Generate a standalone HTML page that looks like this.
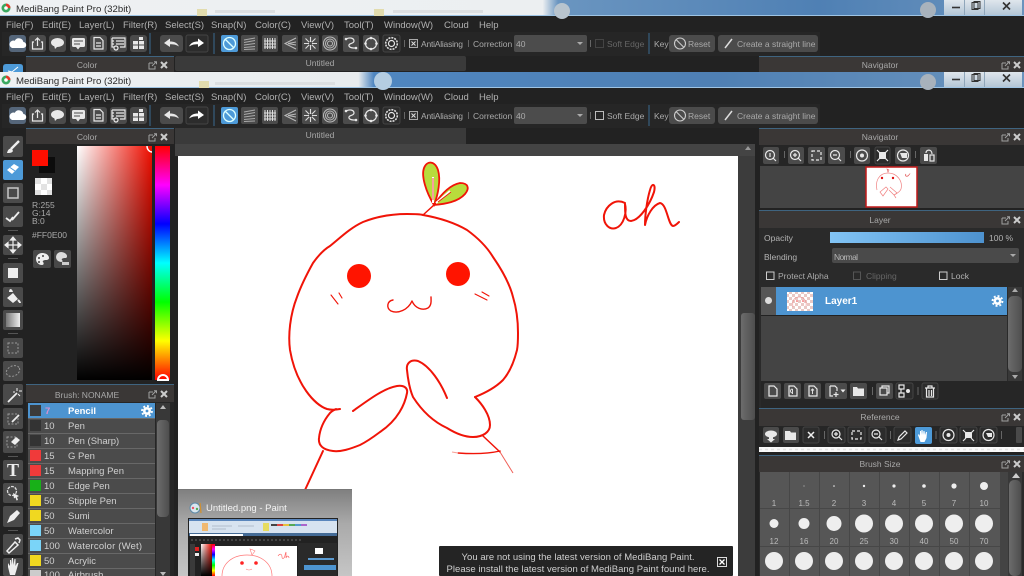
<!DOCTYPE html>
<html><head><meta charset="utf-8"><title>MediBang Paint Pro</title>
<style>
html,body{margin:0;padding:0;background:#222;width:1024px;height:576px;overflow:hidden}
svg{display:block;position:absolute;left:0;top:0;filter:blur(.3px)}
text{font-family:"Liberation Sans",sans-serif;font-size:9.5px;fill:#b4b4b4}
.m{font-size:9.5px;fill:#b0b0b0}
.t{font-size:9.6px;fill:#2a2a2a}
.s{font-size:8.5px;fill:#aaa}
.h{font-size:8.5px;fill:#a8a8a8;text-anchor:middle}
.n{font-size:9.5px;fill:#d0d0d0}
.l{font-size:8.5px;fill:#b4b4b4}
.bl{font-size:8px;fill:#bbb;text-anchor:middle}
.b{fill:#4b4b4b}
.ic{fill:none;stroke:#e8e8e8;stroke-width:1.2}
.fi{fill:#e8e8e8}
.r{fill:none;stroke:#f01408;stroke-linecap:round;stroke-linejoin:round}
</style></head><body>
<svg width="1024" height="576" viewBox="0 0 1024 576" xmlns="http://www.w3.org/2000/svg">
<defs>
<linearGradient id="t1" x1="0" x2="1" y1="0" y2="0"><stop offset="0" stop-color="#eef1f3"/><stop offset=".53" stop-color="#eceff1"/><stop offset=".545" stop-color="#6a95c0"/><stop offset=".8" stop-color="#4f80b4"/><stop offset="1" stop-color="#6a93bd"/></linearGradient>
<linearGradient id="t2" x1="0" x2="1" y1="0" y2="0"><stop offset="0" stop-color="#eef1f3"/><stop offset=".35" stop-color="#e8ecee"/><stop offset=".365" stop-color="#4f86c0"/><stop offset=".7" stop-color="#4f80b4"/><stop offset="1" stop-color="#6a93bd"/></linearGradient>
<linearGradient id="sw" x1="0" x2="1" y1="0" y2="0"><stop offset="0" stop-color="#fff"/><stop offset="1" stop-color="#f00e00"/></linearGradient>
<linearGradient id="sb" x1="0" x2="0" y1="0" y2="1"><stop offset="0" stop-color="#000" stop-opacity="0"/><stop offset="1" stop-color="#000"/></linearGradient>
<linearGradient id="hue" x1="0" x2="0" y1="0" y2="1"><stop offset="0" stop-color="#f00"/><stop offset=".167" stop-color="#f0f"/><stop offset=".333" stop-color="#00f"/><stop offset=".5" stop-color="#0ff"/><stop offset=".667" stop-color="#0f0"/><stop offset=".833" stop-color="#ff0"/><stop offset="1" stop-color="#f00"/></linearGradient>
<linearGradient id="op" x1="0" x2="1" y1="0" y2="0"><stop offset="0" stop-color="#82c4f5"/><stop offset="1" stop-color="#4d92cf"/></linearGradient>
<linearGradient id="sc" x1="0" x2="1" y1="0" y2="0"><stop offset="0" stop-color="#6c6c6c"/><stop offset="1" stop-color="#4e4e4e"/></linearGradient>
<linearGradient id="pop" x1="0" x2="0" y1="0" y2="1"><stop offset="0" stop-color="#7f7f7f"/><stop offset=".4" stop-color="#aaa"/><stop offset="1" stop-color="#c6c6c6"/></linearGradient>
<linearGradient id="grd" x1="0" x2="1" y1="0" y2="0"><stop offset="0" stop-color="#777"/><stop offset="1" stop-color="#eee"/></linearGradient>
<linearGradient id="cap" x1="0" x2="0" y1="0" y2="1"><stop offset="0" stop-color="#dfe6ec"/><stop offset="1" stop-color="#b4c6d6"/></linearGradient>
<pattern id="ck2" width="6" height="6" patternUnits="userSpaceOnUse"><rect width="6" height="6" fill="#fff"/><rect width="3" height="3" fill="#e9c9c5"/><rect x="3" y="3" width="3" height="3" fill="#e9c9c5"/></pattern>

<g id="pin"><path d="M0 2h4M0 2v6h6V5" fill="none" stroke="#a0a0a0" stroke-width="1"/><path d="M3 5l4-4M5 .8h2.5v2.5" fill="none" stroke="#a0a0a0" stroke-width="1"/><path d="M12 1l6 6M18 1l-6 6" stroke="#ccc" stroke-width="2"/></g>

<g id="gear"><circle r="4" fill="#fff"/><circle r="5" fill="none" stroke="#fff" stroke-width="1.8" stroke-dasharray="2 1.9"/><circle r="1.4" fill="#4d94d0"/></g>

<g id="tb">
<rect x="9" y="35" width="17" height="17" rx="3" fill="#55667a"/>
<path d="M12 48h11a3 3 0 0 0 .4-6 4.6 4.6 0 0 0-8.600-1.200A3.600 3.600 0 0 0 12 48z" fill="#fff"/>
<rect class="b" x="29" y="35" width="17" height="17" rx="3"/><path class="ic" d="M34 42h-1.500v7h10v-7H41M37.500 46v-8M35 40.500l2.500-2.500 2.500 2.500"/>
<rect class="b" x="49" y="35" width="17" height="17" rx="3"/><ellipse class="fi" cx="57.500" cy="42.500" rx="6.500" ry="4.500"/><path class="fi" d="M54 45l1 4 3-3z"/>
<rect class="b" x="70" y="35" width="17" height="17" rx="3"/><rect class="fi" x="72" y="38" width="13" height="9" rx="1.500"/><path d="M74 41h9M74 44h6" stroke="#4b4b4b"/><path class="fi" d="M76 47h4l-2 2.500z"/>
<rect class="b" x="90" y="35" width="17" height="17" rx="3"/><path class="ic" d="M94 37.500h6l3 3v8.500h-9zM96 43h5M96 46h5"/>
<rect class="b" x="110" y="35" width="17" height="17" rx="3"/><path class="ic" d="M112 38h13v9h-5M112 38v9h2M116 41h8M116 44h8M112 41h2M112 44h2" stroke-width="1"/><circle class="ic" cx="116" cy="48" r="2"/>
<rect class="b" x="130" y="35" width="17" height="17" rx="3"/><path class="fi" d="M133 41h5v3.500h-5zM139 41h5v3.500h-5zM133 45.500h5V49h-5zM139 45.500h5V49h-5zM139 37h4v3h-4z"/>
<path d="M150 33v21" stroke="#3a6a90"/>
<rect class="b" x="160" y="35" width="23" height="17" rx="3"/><path class="fi" d="M164 43l6-4.500v3c4 0 7 1 9 5-3-2-5-2.300-9-2.300V47z"/>
<rect x="186" y="35" width="22" height="17" rx="2" fill="#2c2c2c" stroke="#444"/><path d="M204 43l-6-4.500v3c-4 0-7 1-9 5 3-2 5-2.300 9-2.300V47z" fill="#fff"/>
<path d="M214 33v21" stroke="#3a6a90"/>
<rect x="221" y="35" width="17" height="17" rx="2" fill="#4d9ad8"/><circle cx="229.500" cy="43.500" r="6" fill="none" stroke="#dff" stroke-width="1.300"/><path d="M225.500 39.500l8 8" stroke="#dff" stroke-width="1.300"/>
<rect class="b" x="241" y="35" width="17" height="17" rx="2"/><path d="M244 40l11-2M244 42.500l11-2M244 45l11-1.500M244 47.500l11-1M244 49.500l11-.5" stroke="#aaa" stroke-width="1"/>
<rect class="b" x="262" y="35" width="16" height="17" rx="2"/><path d="M265 38v11M267.500 38v11M270 38v11M272.500 38v11M275 38v11M264 41h12M264 44h12M264 47h12" stroke="#ddd" stroke-width="1"/>
<rect class="b" x="282" y="35" width="16" height="17" rx="2"/><path d="M296 38l-11 5.500 11 5.500M296 42l-8 1.500 8 1.500" fill="none" stroke="#bbb"/>
<rect class="b" x="302" y="35" width="17" height="17" rx="2"/><path d="M310.500 37v13M304 43.500h13M305.500 38.500l10 10M315.500 38.500l-10 10" stroke="#ddd" stroke-width="1.100"/><rect x="309" y="42" width="3" height="3" fill="#4b4b4b"/>
<rect class="b" x="322" y="35" width="16" height="17" rx="2"/><circle cx="330" cy="43.500" r="6.500" fill="none" stroke="#bbb"/><circle cx="330" cy="43.500" r="4.500" fill="none" stroke="#bbb"/><circle cx="330" cy="43.500" r="2.500" fill="none" stroke="#bbb"/>
<rect class="b" x="343" y="35" width="16" height="17" rx="2"/><path class="ic" d="M346 39c4-2 8-1 8 2 0 3-6 2-5 5 .5 2 4 2 7 2"/><circle class="fi" cx="346" cy="39" r="1.300"/><circle class="fi" cx="356" cy="48" r="1.300"/>
<rect class="b" x="363" y="35" width="16" height="17" rx="2"/><circle class="ic" cx="371" cy="43.500" r="5.500" stroke-width="1.400"/><circle class="fi" cx="371" cy="38" r="1.300"/><circle class="fi" cx="371" cy="49" r="1.300"/><circle class="fi" cx="365.500" cy="43.500" r="1.300"/><circle class="fi" cx="376.500" cy="43.500" r="1.300"/>
<rect x="383" y="35" width="17" height="17" rx="2" fill="#2c2c2c" stroke="#444"/><circle class="ic" cx="391.500" cy="43.500" r="3"/><circle cx="391.500" cy="43.500" r="5.800" fill="none" stroke="#ddd" stroke-width="1.600" stroke-dasharray="2 1"/>
<path d="M404.500 40v7M468.500 40v7M590.500 40v7" stroke="#666"/>
<rect x="409.500" y="39.500" width="8" height="8" fill="#333" stroke="#aaa"/><path d="M411.500 41.500l4 4M415.500 41.500l-4 4" stroke="#ddd"/>
<rect x="514" y="35" width="73" height="17" rx="2" fill="#4c4c4c"/><path d="M577 42h6l-3 3z" fill="#aaa"/>
<path d="M649 33v21" stroke="#3a6a90"/>
<rect class="b" x="669" y="35" width="46" height="17" rx="3"/><circle cx="680" cy="43.500" r="5.500" fill="none" stroke="#ccc" stroke-width="1.100"/><path d="M676 39.500l8 8" stroke="#ccc" stroke-width="1.100"/>
<rect class="b" x="718" y="35" width="100" height="17" rx="3"/><path d="M725 48l7-9" stroke="#ddd" stroke-width="1.500"/>
</g>

<g id="caps"><rect x="944" width="78" height="15" fill="url(#cap)"/><path d="M964.500 0v15M984.500 0v15" stroke="#8fa6ba"/><path d="M952 7.500h8" stroke="#333" stroke-width="1.600"/><rect x="972" y="2.500" width="6" height="7" fill="none" stroke="#333"/><rect x="974" y="1.500" width="6" height="7" fill="none" stroke="#333"/><path d="M1003 2.500l7 7M1010 2.500l-7 7" stroke="#333" stroke-width="1.600"/></g>
</defs>

<rect width="1024" height="576" fill="#222"/>

<!-- first window -->
<rect width="1024" height="16" fill="url(#t1)"/>
<path d="M0 15.500h1024" stroke="#9ec4e4" stroke-width="1"/>
<circle cx="562" cy="11" r="8" fill="#b8c4ce"/><circle cx="928" cy="10" r="8" fill="#a8b2bc"/>
<rect x="197" y="9" width="10" height="7" fill="#e2dcae"/><rect x="374" y="9" width="10" height="7" fill="#e2dcae"/>
<rect x="215" y="10" width="60" height="3" fill="#dcdfe1"/><rect x="393" y="10" width="90" height="3" fill="#dcdfe1"/>
<circle cx="6" cy="8" r="4.500" fill="#3aa860"/><path d="M6 3.500a4.500 4.500 0 0 1 4.500 4.500H6z" fill="#e23a2a"/><circle cx="6" cy="8" r="1.800" fill="#fff"/>
<text class="t" x="16" y="12">MediBang Paint Pro (32bit)</text>
<use href="#caps"/>
<text class="m" x="6" y="28">File(F)</text><text class="m" x="42" y="28">Edit(E)</text><text class="m" x="79" y="28">Layer(L)</text><text class="m" x="123" y="28">Filter(R)</text><text class="m" x="165" y="28">Select(S)</text><text class="m" x="211" y="28">Snap(N)</text><text class="m" x="255" y="28">Color(C)</text><text class="m" x="301" y="28">View(V)</text><text class="m" x="344" y="28">Tool(T)</text><text class="m" x="384" y="28">Window(W)</text><text class="m" x="444" y="28">Cloud</text><text class="m" x="479" y="28">Help</text>
<rect x="2" y="32" width="818" height="24" fill="#262626"/>
<use href="#tb"/>
<text class="s" x="421" y="47" textLength="42">AntiAliasing</text><text class="s" x="473" y="47">Correction</text><text class="s" x="516" y="47">40</text>
<rect x="595.500" y="39.500" width="8" height="8" fill="none" stroke="#444"/><text class="s" x="607" y="47" style="fill:#666">Soft Edge</text>
<text class="s" x="654" y="47">Key</text><text class="s" x="688" y="47">Reset</text><text class="s" x="737" y="47">Create a straight line</text>
<rect x="26" y="56" width="148" height="16" fill="#3a3736"/><path d="M26 56.500h148" stroke="#3f6480"/>
<text class="h" x="87" y="68">Color</text><use href="#pin" x="149" y="61"/>
<rect x="175" y="56" width="291" height="15" rx="2" fill="#3a3a3a"/><text class="h" x="320" y="66">Untitled</text>
<rect x="759" y="56" width="265" height="16" fill="#3a3736"/><path d="M759 56.500h265" stroke="#3f6480"/>
<text class="h" x="880" y="68">Navigator</text><use href="#pin" x="1002" y="61"/>
<path d="M3 67q0-3 3-3h14q3 0 3 3v5H3z" fill="#4d9ad8"/><path d="M8 71l4 1 6-5" stroke="#fff" fill="none"/>

<!-- second window -->
<rect y="72" width="1024" height="16" fill="url(#t2)"/>
<path d="M0 87.500h1024" stroke="#9ec4e4" stroke-width="1"/>
<circle cx="383" cy="81" r="9" fill="#b4cde2"/><circle cx="928" cy="82" r="8" fill="#a8b2bc"/>
<rect x="199" y="81" width="10" height="7" fill="#e2dcae"/><rect x="215" y="82" width="120" height="3" fill="#dcdfe1"/>
<circle cx="6" cy="80" r="4.500" fill="#3aa860"/><path d="M6 75.500a4.500 4.500 0 0 1 4.500 4.500H6z" fill="#e23a2a"/><circle cx="6" cy="80" r="1.800" fill="#fff"/>
<text class="t" x="16" y="84">MediBang Paint Pro (32bit)</text>
<use href="#caps" y="72"/>
<text class="m" x="6" y="100">File(F)</text><text class="m" x="42" y="100">Edit(E)</text><text class="m" x="79" y="100">Layer(L)</text><text class="m" x="123" y="100">Filter(R)</text><text class="m" x="165" y="100">Select(S)</text><text class="m" x="211" y="100">Snap(N)</text><text class="m" x="255" y="100">Color(C)</text><text class="m" x="301" y="100">View(V)</text><text class="m" x="344" y="100">Tool(T)</text><text class="m" x="384" y="100">Window(W)</text><text class="m" x="444" y="100">Cloud</text><text class="m" x="479" y="100">Help</text>
<rect x="2" y="104" width="818" height="24" fill="#262626"/>
<use href="#tb" y="72"/>
<text class="s" x="421" y="119" textLength="42">AntiAliasing</text><text class="s" x="473" y="119">Correction</text><text class="s" x="516" y="119">40</text>
<rect x="595.500" y="111.500" width="8" height="8" fill="none" stroke="#bbb"/><text class="s" x="607" y="119">Soft Edge</text>
<text class="s" x="654" y="119">Key</text><text class="s" x="688" y="119">Reset</text><text class="s" x="737" y="119">Create a straight line</text>

<!-- canvas area -->
<rect x="174" y="128" width="585" height="448" fill="#222"/>
<rect x="175" y="128" width="291" height="16" fill="#3a3a3a"/><text class="h" x="320" y="138">Untitled</text>
<rect x="175" y="144" width="580" height="12" fill="#444"/>
<rect x="178" y="156" width="560" height="420" fill="#fff"/>
<rect x="738" y="156" width="17" height="420" fill="#3c3c3c"/>
<rect x="741" y="313" width="14" height="107" rx="3" fill="url(#sc)"/>
<path d="M748 146l-3 4h6z" fill="#999"/>

<!-- drawing -->
<path class="r" stroke-width="2" d="M340 409C335 410 331 410 327 409C315 405 296 385 290 350C288 335 290 315 297 297C302 283 308 272 313 263C318 256 323 250 330 246C340 238 350 228 363 222C378 216 392 214 407 214C415 214 420 214 423 215C440 218 455 223 467 230C478 238 487 247 493 257C502 270 510 285 513 297C517 310 518 322 518 333C518 340 518 345 517 350C514 362 510 372 503 380C495 388 485 393 475 397"/>
<path class="r" stroke-width="2" d="M353 411C367 401 384 388 397 386C404 385 408 388 407 393C405 404 398 420 380 432C372 438 366 442 360 445C350 449 341 452 333 451C324 450 318 446 319 438C320 428 325 419 330 413C332 411 334 410 336 409"/>
<path class="r" stroke-width="2" d="M447 398C441 383 430 366 418 361C410 359 406 364 407 370C408 380 410 390 413 397C422 411 434 422 447 428C455 433 464 437 473 437C483 437 490 432 490 425C490 415 482 404 475 397"/>
<path class="r" stroke-width="2" d="M323 451L305 490"/>
<path class="r" stroke-width="1.500" d="M483 436L500 452"/>
<path d="M500 452L513 473" stroke="#f06058" stroke-width="1" fill="none"/>
<path class="r" stroke-width="1.400" d="M458 453C472 454 487 454 500 451"/>
<path d="M452 452L458 453" stroke="#f8a098" stroke-width="1"/>
<circle cx="359" cy="276" r="12" fill="#ff1400"/><circle cx="458" cy="274" r="12" fill="#ff1400"/>
<path class="r" stroke-width="1.400" d="M393 300C387 301 386 308 391 311C398 314 408 310 412 301C415 308 422 311 428 308C432 305 431 300 431 297"/>
<path class="r" stroke-width="1.100" d="M331 295L338 304M339 293L342 298M475 294L487 300M482 292L489 296"/>
<path d="M434 205C426 192 421 176 424 168C427 160 435 161 438 170C441 180 438 195 434 205z" fill="#b8dc3c" stroke="#f01408" stroke-width="1.800"/>
<path d="M434 205C440 196 449 185 460 183C468 183 470 188 465 194C458 202 445 204 434 205z" fill="#b8dc3c" stroke="#f01408" stroke-width="1.800"/>
<path d="M433 203L433 177M436 203L450 191" stroke="#fff" stroke-width="2"/><path d="M433 200L433 178M438 202L451 192" stroke="#f01408" stroke-width=".8"/>
<path class="r" stroke-width="1.500" d="M434 205L423 215"/>
<path class="r" stroke-width="2" d="M625 203C615 198 606 206 604 215C603 225 610 230 616 228C624 225 627 212 625 204C625 213 625 221 631 221C640 220 650 204 654 192C656 184 652 182 650 190C647 200 645 215 645 225C647 215 653 205 660 203C667 204 668 225 673 226C675 226 677 224 679 222"/>

<!-- popup -->
<rect x="178" y="489" width="174" height="87" fill="url(#pop)"/><path d="M178 489.500h174" stroke="#777"/>
<circle cx="195" cy="508" r="5" fill="#d9e6ef" stroke="#5d8aa8"/><circle cx="193" cy="508" r="1.200" fill="#e56"/><circle cx="197" cy="509" r="1.200" fill="#5a5"/><path d="M200 503l1 10" stroke="#d09030" stroke-width="1.300"/>
<text x="206" y="511" style="font-size:9.500px;fill:#f4f4f4">Untitled.png - Paint</text>
<rect x="188" y="518" width="150" height="58" fill="#222"/>
<rect x="189" y="519" width="148" height="14" fill="#d7e3f0"/>
<rect x="189" y="519" width="148" height="2" fill="#5a86bc"/>
<rect x="202" y="523" width="6" height="8" fill="#f0b870"/><rect x="263" y="523" width="6" height="8" fill="#e6dc60"/>
<path d="M212 526h20M212 529h14M238 526h16" stroke="#b0bccc"/>
<path d="M271 525h6" stroke="#444" stroke-width="2"/><path d="M277 525h6" stroke="#d44" stroke-width="2"/><path d="M283 525h6" stroke="#e8c040" stroke-width="2"/><path d="M289 525h6" stroke="#5a5" stroke-width="2"/><path d="M295 525h6" stroke="#59c" stroke-width="2"/><path d="M301 525h6" stroke="#a6c" stroke-width="2"/>
<rect x="189" y="533" width="148" height="3" fill="#446b96"/><rect x="190" y="534" width="53" height="2" fill="#fff"/>
<path d="M191 540h110" stroke="#666" stroke-dasharray="2 2"/>
<rect x="201" y="544" width="11" height="32" fill="url(#sw)"/><rect x="201" y="544" width="11" height="32" fill="url(#sb)"/>
<rect x="212" y="544" width="3" height="32" fill="url(#hue)"/>
<rect x="215" y="546" width="82" height="30" fill="#fff"/>
<rect x="190" y="544" width="5" height="32" fill="#3a3a3a"/><rect x="195" y="547" width="4" height="4" fill="#d22"/><rect x="195" y="553" width="4" height="3" fill="#eee"/>
<rect x="298" y="543" width="39" height="33" fill="#2a2a2a"/><rect x="315" y="548" width="8" height="6" fill="#fff"/><rect x="308" y="558" width="26" height="2" fill="#5a9ad0"/><rect x="304" y="565" width="32" height="5" fill="#4d94d0"/>
<path d="M222 576c0-12 10-21 25-21s25 9 25 21" fill="none" stroke="#f77" stroke-width=".7"/><circle cx="242" cy="563" r="1.800" fill="#f22"/><circle cx="256" cy="563" r="1.800" fill="#f22"/><path d="M246 569q3 2 6 0" fill="none" stroke="#f77" stroke-width=".6"/><path d="M252 555l-2-6 3 1 2 1z" fill="none" stroke="#f77" stroke-width=".6"/>
<path d="M278 556c2-3 4-2 4 1s3 1 3-2l1-3v6c1-3 3-2 3 0" fill="none" stroke="#f55" stroke-width=".6"/>

<!-- notification -->
<rect x="439" y="546" width="294" height="30" rx="1" fill="#242424"/>
<text x="578" y="560" text-anchor="middle" style="font-size:9.500px;fill:#cfcfcf" textLength="233">You are not using the latest version of MediBang Paint.</text>
<text x="578" y="572" text-anchor="middle" style="font-size:9.500px;fill:#cfcfcf" textLength="263">Please install the latest version of MediBang Paint found here.</text>
<rect x="717.500" y="557.500" width="9" height="9" fill="none" stroke="#ddd"/><path d="M719.500 559.500l5 5M724.500 559.500l-5 5" stroke="#fff" stroke-width="1.300"/>

<!-- tool strip -->
<rect x="0" y="128" width="26" height="448" fill="#222"/>
<g fill="#4a4a4a">
<rect x="3" y="136" width="20" height="21" rx="2"/>
<rect x="3" y="183" width="20" height="20" rx="2"/><rect x="3" y="206" width="20" height="21" rx="2"/>
<rect x="3" y="235" width="20" height="20" rx="2"/><rect x="3" y="263" width="20" height="20" rx="2"/>
<rect x="3" y="287" width="20" height="20" rx="2"/><rect x="3" y="310" width="20" height="20" rx="2"/>
<rect x="3" y="338" width="20" height="20" rx="2"/><rect x="3" y="361" width="20" height="20" rx="2"/>
<rect x="3" y="384" width="20" height="21" rx="2"/><rect x="3" y="408" width="20" height="21" rx="2"/>
<rect x="3" y="431" width="20" height="22" rx="2"/><rect x="3" y="460" width="20" height="20" rx="2"/>
<rect x="3" y="483" width="20" height="20" rx="2"/><rect x="3" y="506" width="20" height="21" rx="2"/>
<rect x="3" y="534" width="20" height="21" rx="2"/><rect x="3" y="558" width="20" height="18" rx="2"/>
</g>
<rect x="3" y="160" width="20" height="20" rx="2" fill="#4d9ad8"/>
<path d="M8 230.500h10M8 258.500h10M8 333.500h10M8 456.500h10M8 530.500h10" stroke="#555"/>
<path d="M19 141L11 149" stroke="#eee" stroke-width="2.400"/><path d="M7 153c1-4 3-5 5-4l1 2c-1 2-3 2-6 2z" fill="#eee"/>
<path d="M7 170l7-6 5 3-7 7z" fill="#fff"/><path d="M10 167.500l5 3.500" stroke="#4d9ad8"/>
<rect x="8" y="188" width="10" height="10" fill="none" stroke="#c8c8c8" stroke-width="1.500"/>
<path d="M6 218l4 3 3-4M12 220l7-8" fill="none" stroke="#eee" stroke-width="1.800"/>
<path d="M13 237v16M5 245h16M13 237l-2.500 3h5zM13 253l-2.500-3h5zM5 245l3-2.500v5zM21 245l-3-2.500v5z" fill="#eee" stroke="#eee" stroke-width="1.200"/>
<rect x="8" y="268" width="10" height="10" fill="#eee"/>
<path d="M7 298l6-5 5 6-5 4zM9 292c0-4 3-4 4 0" fill="#eee"/><path d="M18 300c1 1 2 2 2 3" stroke="#eee" stroke-width="2"/>
<rect x="6" y="313" width="14" height="14" fill="url(#grd)"/>
<rect x="8" y="343" width="10" height="10" fill="none" stroke="#999" stroke-dasharray="2 1.500"/>
<ellipse cx="13" cy="371" rx="7" ry="5" fill="none" stroke="#999" stroke-dasharray="2 1.500" transform="rotate(-25 13 371)"/>
<path d="M8 402l9-9" stroke="#eee" stroke-width="1.800"/><path d="M17 388v3M19 391h3M15 392h-2M18 394l2 2" stroke="#eee"/>
<rect x="8" y="414" width="10" height="10" fill="none" stroke="#999" stroke-dasharray="2 1.500"/><path d="M12 422l7-7" stroke="#eee" stroke-width="1.800"/>
<rect x="7" y="437" width="10" height="10" fill="none" stroke="#999" stroke-dasharray="2 1.500"/><path d="M11 442l5-5 4 3-5 5z" fill="#eee"/>
<text x="13" y="476" text-anchor="middle" style="font-family:'Liberation Serif',serif;font-size:18px;font-weight:bold;fill:#eee">T</text>
<circle cx="12" cy="491" r="4.500" fill="none" stroke="#ddd" stroke-width="1.300" stroke-dasharray="3 1"/><path d="M13 493l6 3-2 1 1 3-1.500.5-1-3-1.500 1z" fill="#eee"/>
<path d="M7 523l3-7 7-6 3 3-6 7z" fill="#eee"/>
<path d="M7 551l8-9 3 3-9 8zM15 539l3-1 2 2-1 3" fill="none" stroke="#eee" stroke-width="1.500"/>
<path d="M8 567v-4l2 3v-6h1v5l1-7h1l.5 7 1-6h1l0 7 1.500-3h1.500l-2 7-1.500 5h-5z" fill="#eee"/>

<!-- color panel -->
<rect x="26" y="128" width="148" height="16" fill="#3a3736"/><path d="M26 128.500h148" stroke="#3f6480"/>
<text class="h" x="87" y="140">Color</text><use href="#pin" x="149" y="133"/>
<rect x="39" y="157" width="16" height="16" fill="#0c0c0c"/><rect x="32" y="150" width="16" height="16" fill="#ff0e00"/>
<rect x="35" y="178" width="17" height="17" fill="#fff"/>
<path d="M35 178h6v6h-6zM47 178h5v6h-5zM41 184h6v6h-6zM35 190h6v5h-6zM47 190h5v5h-5z" fill="#e2e2e2"/>
<text class="s" x="32" y="208">R:255</text><text class="s" x="32" y="216">G:14</text><text class="s" x="32" y="224">B:0</text><text class="s" x="32" y="238">#FF0E00</text>
<rect x="33" y="250" width="18" height="18" rx="2" fill="#484848"/><rect x="54" y="250" width="17" height="18" rx="2" fill="#484848"/>
<path d="M42 253a6 6 0 1 0 0 12c2 0 2-2 1-3s1-2 3-2 3-1 3-2c0-3-3-5-7-5z" fill="#eee"/><circle cx="39" cy="258" r="1" fill="#444"/><circle cx="43" cy="256" r="1" fill="#444"/><circle cx="39" cy="262" r="1" fill="#444"/>
<path d="M61 252a5 5 0 1 0 0 10c2 0 2-1 1-2s1-2 3-2 2-1 2-2c0-2-3-4-6-4z" fill="#ddd"/><rect x="62" y="262" width="7" height="3" fill="#ccc"/>
<rect x="77" y="146" width="75" height="234" fill="url(#sw)"/><rect x="77" y="146" width="75" height="234" fill="url(#sb)"/>
<path d="M147 146c0 4 3 6 5 6" fill="none" stroke="#fff" stroke-width="1.500"/>
<rect x="155" y="146" width="15" height="234" fill="url(#hue)"/>
<path d="M158 380a5 5 0 0 1 10 0z" fill="none" stroke="#fff" stroke-width="2"/>

<!-- brush panel -->
<rect x="26" y="384" width="148" height="192" fill="#262626"/>
<path d="M26 384.500h148" stroke="#3f6480"/><rect x="26" y="385" width="148" height="17" fill="#3a3736"/>
<text class="h" x="87" y="398">Brush: NONAME</text><use href="#pin" x="149" y="390"/>
<rect x="28" y="403" width="127" height="173" fill="#4b4b4b"/>
<rect x="28" y="403" width="127" height="15" fill="#4d94d0"/>
<path d="M28 433.500h127M28 448.500h127M28 463.500h127M28 478.500h127M28 493.500h127M28 508.500h127M28 523.500h127M28 538.500h127M28 553.500h127M28 568.500h127M28 418.500h127" stroke="#686868"/>
<rect x="30" y="405" width="11" height="11" fill="#3b3b3b"/><rect x="30" y="420" width="11" height="11" fill="#333"/><rect x="30" y="435" width="11" height="11" fill="#333"/><rect x="30" y="450" width="11" height="11" fill="#f03a3a"/><rect x="30" y="465" width="11" height="11" fill="#f03a3a"/><rect x="30" y="480" width="11" height="11" fill="#18b018"/><rect x="30" y="495" width="11" height="11" fill="#f0d820"/><rect x="30" y="510" width="11" height="11" fill="#f0d820"/><rect x="30" y="525" width="11" height="11" fill="#7ad4f8"/><rect x="30" y="540" width="11" height="11" fill="#7ad4f8"/><rect x="30" y="555" width="11" height="11" fill="#f0d820"/><rect x="30" y="570" width="11" height="6" fill="#ccc"/>
<text class="n" x="45" y="414" style="fill:#d890d0;font-weight:bold">7</text><text class="n" x="68" y="414" style="fill:#fff;font-weight:bold">Pencil</text>
<use href="#gear" x="147" y="411"/>
<text class="n" x="44" y="429">10</text><text class="n" x="68" y="429">Pen</text>
<text class="n" x="44" y="444">10</text><text class="n" x="68" y="444">Pen (Sharp)</text>
<text class="n" x="44" y="459">15</text><text class="n" x="68" y="459">G Pen</text>
<text class="n" x="44" y="474">15</text><text class="n" x="68" y="474">Mapping Pen</text>
<text class="n" x="44" y="489">10</text><text class="n" x="68" y="489">Edge Pen</text>
<text class="n" x="44" y="504">50</text><text class="n" x="68" y="504">Stipple Pen</text>
<text class="n" x="44" y="519">50</text><text class="n" x="68" y="519">Sumi</text>
<text class="n" x="44" y="534">50</text><text class="n" x="68" y="534">Watercolor</text>
<text class="n" x="44" y="549">100</text><text class="n" x="68" y="549" textLength="74">Watercolor (Wet)</text>
<text class="n" x="44" y="564">50</text><text class="n" x="68" y="564">Acrylic</text>
<text class="n" x="44" y="578">100</text><text class="n" x="68" y="578">Airbrush</text>
<rect x="156" y="403" width="14" height="173" fill="#383838"/><rect x="157" y="420" width="12" height="97" rx="4" fill="url(#sc)"/>
<path d="M163 405l-3 4h6zM163 576l-3-4h6z" fill="#bbb"/>

<!-- right: navigator -->
<rect x="759" y="128" width="265" height="17" fill="#3a3736"/><path d="M759 128.500h265" stroke="#3f6480"/>
<text class="h" x="880" y="140">Navigator</text><use href="#pin" x="1002" y="133"/>
<rect x="760" y="145" width="264" height="21" fill="#262626"/>
<g class="b"><rect x="763" y="147" width="16" height="17" rx="2"/><rect x="788" y="147" width="16" height="17" rx="2"/><rect x="808" y="147" width="17" height="17" rx="2"/><rect x="828" y="147" width="17" height="17" rx="2"/><rect x="854" y="147" width="16" height="17" rx="2"/><rect x="895" y="147" width="16" height="17" rx="2"/><rect x="920" y="147" width="17" height="17" rx="2"/></g>
<rect x="875" y="147" width="15" height="17" rx="2" fill="#2c2c2c" stroke="#444"/>
<circle class="ic" cx="770" cy="155" r="4.500"/><path class="ic" d="M773 158l3 3M770 153v4"/>
<circle class="ic" cx="795" cy="155" r="4.500"/><path class="ic" d="M798 158l3 3M793 155h4M795 153v4"/>
<rect class="ic" x="812" y="151" width="9" height="9" stroke-dasharray="3 2"/>
<circle class="ic" cx="835" cy="155" r="4.500"/><path class="ic" d="M838 158l3 3M833 155h4"/>
<circle class="ic" cx="862" cy="155.500" r="5.500" stroke-width="1.500"/><circle class="fi" cx="862" cy="155.500" r="2"/>
<rect class="fi" x="879" y="152" width="7" height="7"/><path class="ic" d="M877 150l3 3M888 150l-3 3M877 161l3-3M888 161l-3-3"/>
<circle class="ic" cx="903" cy="155.500" r="5.500" stroke-width="1.500"/><path class="fi" d="M900 153h7v5h-5z"/>
<rect class="fi" x="924" y="154" width="4" height="7"/><rect class="ic" x="930" y="155" width="4" height="6"/><path class="ic" d="M926 153c0-4 6-4 6 1"/>
<path d="M784.500 151v7M850.500 151v7M915.500 151v7" stroke="#666"/>
<rect x="760" y="166" width="264" height="42" fill="#444"/>
<rect x="866" y="167" width="51" height="40" fill="#fff" stroke="#c01818" stroke-width="1.500"/>
<path d="M877 190c-2-9 2-17 11-17s15 8 13 16c-1 3-5 5-7 6l2 3M880 192l6-5 2 2-5 7zM890 187l7 6-3 2-5-5" fill="none" stroke="#f08080" stroke-width=".7"/>
<circle cx="882" cy="178" r="1.200" fill="#e01010"/><circle cx="893" cy="178" r="1.200" fill="#e01010"/>
<path d="M906 174c-1 1 0 3 1 2 1 1 3-3 3-2" fill="none" stroke="#e05050" stroke-width=".7"/><path d="M888 172l-1-3 2 1z" fill="none" stroke="#e06060" stroke-width=".6"/>
<rect x="759" y="208" width="265" height="2" fill="#222"/>

<!-- right: layer -->
<path d="M759 210.500h265" stroke="#3f6480"/><rect x="759" y="211" width="265" height="17" fill="#3a3736"/>
<text class="h" x="880" y="223">Layer</text><use href="#pin" x="1002" y="216"/>
<rect x="759" y="228" width="265" height="180" fill="#2a2a2a"/>
<text class="l" x="764" y="241">Opacity</text>
<rect x="830" y="232" width="154" height="11" fill="url(#op)"/>
<text class="l" x="989" y="241">100 %</text>
<text class="l" x="764" y="260">Blending</text>
<rect x="832" y="248" width="187" height="15" rx="2" fill="#4a4a4a"/><text class="l" x="834" y="260" textLength="24">Normal</text><path d="M1010 254h6l-3 3z" fill="#aaa"/>
<rect x="766.500" y="272" width="7.500" height="7.500" fill="none" stroke="#ccc"/><text class="l" x="778" y="279" style="fill:#aaa">Protect Alpha</text>
<rect x="853.500" y="272" width="7" height="7.500" fill="none" stroke="#555"/><text class="l" x="866" y="279" style="fill:#666">Clipping</text>
<rect x="939.500" y="272" width="7.500" height="7.500" fill="none" stroke="#ccc"/><text class="l" x="951" y="279">Lock</text>
<rect x="761" y="287" width="246" height="94" fill="#444"/>
<rect x="761" y="287" width="15" height="28" fill="#565656"/><circle cx="768.500" cy="300.500" r="3.500" fill="#ddd"/>
<rect x="776" y="287" width="231" height="28" fill="#4d94d0"/><path d="M761 315.500h246" stroke="#222"/>
<rect x="787" y="292" width="26" height="19" fill="url(#ck2)"/>
<path d="M793 307c-1-6 1-10 6-10s8 4 7 9" fill="none" stroke="#e88" stroke-width=".6"/><circle cx="797" cy="301" r=".8" fill="#e33"/><circle cx="803" cy="301" r=".8" fill="#e33"/>
<text x="825" y="304" style="font-size:10px;font-weight:bold;fill:#fff">Layer1</text>
<use href="#gear" x="997.500" y="301"/>
<rect x="1008" y="287" width="14" height="94" fill="#383838"/><rect x="1008" y="296" width="14" height="76" rx="5" fill="url(#sc)"/>
<path d="M1015 288l-3 4h6zM1015 379l-3-4h6z" fill="#aaa"/>
<rect x="761" y="381" width="263" height="27" fill="#262626"/>
<g class="b"><rect x="764" y="383" width="17" height="16" rx="2"/><rect x="784" y="383" width="17" height="16" rx="2"/><rect x="804" y="383" width="17" height="16" rx="2"/><rect x="825" y="383" width="22" height="16" rx="2"/><rect x="850" y="383" width="17" height="16" rx="2"/><rect x="876" y="383" width="17" height="16" rx="2"/></g>
<rect x="896" y="383" width="17" height="16" rx="2" fill="#2c2c2c" stroke="#444"/><rect x="922" y="383" width="16" height="16" rx="2" fill="#2c2c2c" stroke="#444"/>
<path class="ic" d="M769 386h5l3 3v7h-8zM789 386h5l3 3v7h-8zM809 386h5l3 3v7h-8zM830 386h5l2 2v3M830 386v10h3M836 392v5M833.500 394.500h5"/>
<path d="M840.500 389.500h5l-2.500 3z" fill="#eee"/><path d="M792.500 389v5M792.500 389a2 2 0 1 0 0 4" fill="none" stroke="#ddd"/><path d="M812.500 394v-5M811 390.500l1.500-1.500 1.500 1.500" fill="none" stroke="#ddd"/>
<path class="fi" d="M853 387h4l1 1.500h6V396h-11z"/>
<rect class="ic" x="880" y="388" width="7" height="7"/><path class="ic" d="M882 388v-2h7v7h-2"/>
<path class="ic" d="M899 385h5v4h-5zM899 393h5v4h-5zM901 389v4" stroke-width="1"/><circle class="fi" cx="908" cy="391" r="2"/>
<path class="ic" d="M925 388h10M928 388v-2h4v2M926.500 388v9h7v-9M929 390v6M931.500 390v6"/>
<path d="M872.500 387v8M918 387v8" stroke="#666"/>

<!-- right: reference -->
<path d="M759 408.500h265" stroke="#3f6480"/><rect x="759" y="409" width="265" height="17" fill="#3a3736"/>
<text class="h" x="880" y="420">Reference</text><use href="#pin" x="1002" y="413"/>
<rect x="759" y="426" width="265" height="21" fill="#262626"/>
<rect class="b" x="763" y="427" width="16" height="16" rx="2"/><rect class="b" x="783" y="427" width="16" height="16" rx="2"/>
<ellipse class="fi" cx="771" cy="434" rx="6" ry="3.500"/><path class="fi" d="M769 436h4v3h2l-4 3.500-4-3.500h2z"/>
<path class="fi" d="M785 431h5l1 1.500h5V440h-11z"/>
<g fill="#2c2c2c" stroke="#444"><rect x="803" y="427" width="16" height="16" rx="2"/><rect x="828" y="427" width="17" height="16" rx="2"/><rect x="848" y="427" width="17" height="16" rx="2"/><rect x="869" y="427" width="17" height="16" rx="2"/><rect x="894" y="427" width="17" height="16" rx="2"/><rect x="940" y="427" width="17" height="16" rx="2"/><rect x="960" y="427" width="17" height="16" rx="2"/><rect x="980" y="427" width="17" height="16" rx="2"/></g>
<rect x="915" y="427" width="17" height="17" rx="2" fill="#4d9ad8"/>
<path d="M808 432l6 6M814 432l-6 6" stroke="#eee" stroke-width="1.500"/>
<circle class="ic" cx="836" cy="434" r="4"/><path class="ic" d="M839 437l3 3M834 434h4M836 432v4"/>
<rect class="ic" x="852" y="431" width="9" height="8" stroke-dasharray="3 2"/>
<circle class="ic" cx="876" cy="434" r="4"/><path class="ic" d="M879 437l3 3M874 434h4"/>
<path class="ic" d="M898 440l1-3 6-6 2 2-6 6z"/>
<path d="M918 435l1-1 1 2v-5h1v4l.5-5h1l.5 5 .5-4h1l.5 4 1-3h1l-.5 6-2 4h-4z" fill="#fff"/>
<circle class="ic" cx="948.500" cy="435" r="5.500" stroke-width="1.400"/><circle class="fi" cx="948.500" cy="435" r="2"/>
<rect class="fi" x="965" y="432" width="7" height="6"/><path class="ic" d="M963 430l3 3M974 430l-3 3M963 441l3-3M974 441l-3-3"/>
<circle class="ic" cx="988.500" cy="435" r="5.500" stroke-width="1.400"/><path class="fi" d="M986 433h6v4h-4z"/>
<path d="M824.500 431v8M890.500 431v8M936 431v8M1001.500 431v8" stroke="#666"/>
<rect x="1016" y="427" width="6" height="16" rx="1" fill="#4a4a4a"/>
<rect x="759" y="447" width="265" height="5" fill="#fafafa"/>
<path d="M759 449.500h265" stroke="#e4e4e4" stroke-width="1.500" stroke-dasharray="3 3"/>
<rect x="759" y="452" width="265" height="3" fill="#222"/>

<!-- right: brush size -->
<path d="M759 455.500h265" stroke="#3f6480"/><rect x="759" y="456" width="265" height="16" fill="#3a3736"/>
<text class="h" x="880" y="467">Brush Size</text><use href="#pin" x="1002" y="460"/>
<rect x="759" y="472" width="265" height="104" fill="#2a2a2a"/>
<rect x="760" y="472" width="240" height="104" fill="#565656"/>
<rect x="1000" y="472" width="8" height="104" fill="#444"/>
<path d="M789.500 472v104M819.500 472v104M849.500 472v104M879.500 472v104M909.500 472v104M939.500 472v104M969.500 472v104M760 508.500h240M760 546.500h240" stroke="#474747"/>
<g fill="#eee">
<circle cx="804" cy="486" r=".5"/><circle cx="834" cy="486" r=".8"/><circle cx="864" cy="486" r="1.200"/><circle cx="894" cy="486" r="1.600"/><circle cx="924" cy="486" r="1.800"/><circle cx="954" cy="486" r="2.600"/><circle cx="984" cy="486" r="4"/>
<circle cx="774" cy="523.500" r="4.500"/><circle cx="804" cy="523.500" r="5.500"/><circle cx="834" cy="523.500" r="7.500"/><circle cx="864" cy="523.500" r="9"/><circle cx="894" cy="523.500" r="9"/><circle cx="924" cy="523.500" r="9"/><circle cx="954" cy="523.500" r="9"/><circle cx="984" cy="523.500" r="9"/>
<circle cx="774" cy="561" r="9"/><circle cx="804" cy="561" r="9"/><circle cx="834" cy="561" r="9"/><circle cx="864" cy="561" r="9"/><circle cx="894" cy="561" r="9"/><circle cx="924" cy="561" r="9"/><circle cx="954" cy="561" r="9"/><circle cx="984" cy="561" r="9"/>
</g>
<text class="bl" x="774" y="506">1</text><text class="bl" x="804" y="506">1.5</text><text class="bl" x="834" y="506">2</text><text class="bl" x="864" y="506">3</text><text class="bl" x="894" y="506">4</text><text class="bl" x="924" y="506">5</text><text class="bl" x="954" y="506">7</text><text class="bl" x="984" y="506">10</text>
<text class="bl" x="774" y="544">12</text><text class="bl" x="804" y="544">16</text><text class="bl" x="834" y="544">20</text><text class="bl" x="864" y="544">25</text><text class="bl" x="894" y="544">30</text><text class="bl" x="924" y="544">40</text><text class="bl" x="954" y="544">50</text><text class="bl" x="984" y="544">70</text>
<rect x="1008" y="472" width="14" height="104" fill="#383838"/><rect x="1009" y="480" width="12" height="96" rx="5" fill="url(#sc)"/>
<path d="M1016 473l-4 5h8z" fill="#ccc"/>
</svg>
</body></html>
